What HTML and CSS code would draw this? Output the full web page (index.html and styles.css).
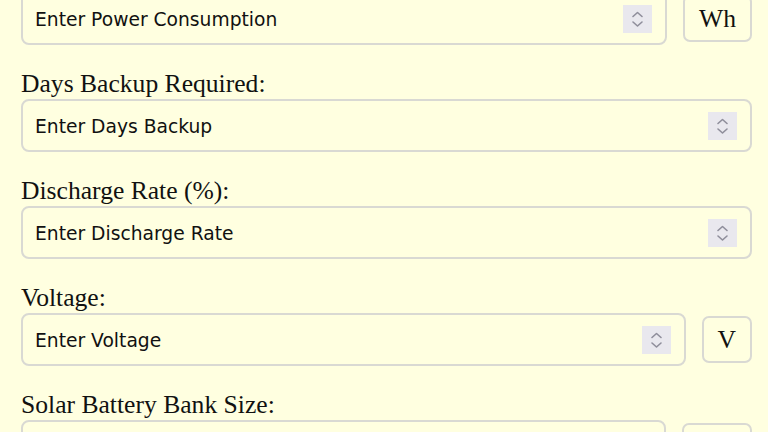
FILE: index.html
```html
<!DOCTYPE html>
<html lang="en">
<head>
<meta charset="utf-8">
<title>Solar Battery Bank Calculator</title>
<link rel="stylesheet" href="styles.css">
</head>
<body>
<form class="calc">
  <div class="group first">
    <div class="row">
      <div class="field"><span class="ph">Enter Power Consumption</span><span class="spin"><svg viewBox="0 0 29 28" width="29" height="28"><path d="M10 11.5 L14.5 7.5 L19 11.5 M10 17 L14.5 21 L19 17" fill="none" stroke="#8f8e9b" stroke-width="1.6" stroke-linecap="round" stroke-linejoin="round"/></svg></span></div>
      <div class="unit">Wh</div>
    </div>
  </div>
  <div class="group">
    <label class="label">Days Backup Required:</label>
    <div class="row">
      <div class="field"><span class="ph">Enter Days Backup</span><span class="spin"><svg viewBox="0 0 29 28" width="29" height="28"><path d="M10 11.5 L14.5 7.5 L19 11.5 M10 17 L14.5 21 L19 17" fill="none" stroke="#8f8e9b" stroke-width="1.6" stroke-linecap="round" stroke-linejoin="round"/></svg></span></div>
    </div>
  </div>
  <div class="group">
    <label class="label">Discharge Rate (%):</label>
    <div class="row">
      <div class="field"><span class="ph">Enter Discharge Rate</span><span class="spin"><svg viewBox="0 0 29 28" width="29" height="28"><path d="M10 11.5 L14.5 7.5 L19 11.5 M10 17 L14.5 21 L19 17" fill="none" stroke="#8f8e9b" stroke-width="1.6" stroke-linecap="round" stroke-linejoin="round"/></svg></span></div>
    </div>
  </div>
  <div class="group">
    <label class="label">Voltage:</label>
    <div class="row">
      <div class="field"><span class="ph">Enter Voltage</span><span class="spin"><svg viewBox="0 0 29 28" width="29" height="28"><path d="M10 11.5 L14.5 7.5 L19 11.5 M10 17 L14.5 21 L19 17" fill="none" stroke="#8f8e9b" stroke-width="1.6" stroke-linecap="round" stroke-linejoin="round"/></svg></span></div>
      <div class="unit">V</div>
    </div>
  </div>
  <div class="group">
    <label class="label">Solar Battery Bank Size:</label>
    <div class="row">
      <div class="field"></div>
      <div class="unit wide"></div>
    </div>
  </div>
</form>
</body>
</html>
```
FILE: styles.css
```css
html, body {
  margin: 0;
  padding: 0;
  background: #ffffe0;
}
body {
  font-family: "Liberation Serif", "Times New Roman", serif;
  color: #111;
  overflow: hidden;
}
.calc {
  margin: -8px 16px 0 21px;
  display: flex;
  flex-direction: column;
}
.group {
  margin-top: 25px;
  display: flex;
  flex-direction: column;
}
.group.first {
  margin-top: 0;
}
.label {
  font-size: 25.6px;
  line-height: 27px;
  margin-bottom: 2px;
  display: block;
}
.row {
  display: flex;
  align-items: center;
  gap: 16px;
}
.field {
  flex: 1;
  box-sizing: border-box;
  height: 53px;
  border: 2px solid #d9d9d3;
  border-radius: 8px;
  background: #ffffe0;
  display: flex;
  align-items: center;
  justify-content: space-between;
  padding: 0 13px 0 12px;
}
.ph {
  font-family: "DejaVu Sans", Verdana, sans-serif;
  font-size: 18.7px;
  color: #111;
  padding-top: 2px;
}
.spin {
  width: 29px;
  height: 28px;
  background: #e9e8ee;
  display: flex;
}
.unit {
  box-sizing: border-box;
  height: 47px;
  border: 2px solid #d9d9d3;
  border-radius: 7px;
  padding: 0 14px;
  display: flex;
  align-items: center;
  font-size: 25.6px;
}
.unit.wide {
  width: 70px;
}
```
